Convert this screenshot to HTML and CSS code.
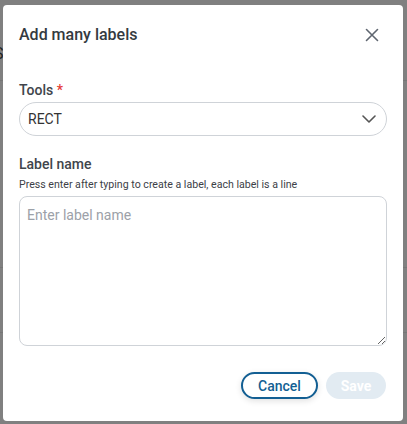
FILE: index.html
```html
<!DOCTYPE html>
<html>
<head>
<meta charset="utf-8">
<link rel="stylesheet" href="styles.css">
</head>
<body>
<div class="page">
  <span class="bg-text bg-s">S</span>
  <div class="bg-line l1"></div>
  <div class="bg-line l2"></div>
  <div class="bg-line l3"></div>
</div>
<div class="overlay">
  <div class="modal">
    <div class="header">
      <h2 class="title">Add many labels</h2>
      <button class="close" aria-label="Close">
        <svg width="14" height="14" viewBox="0 0 14 14"><path d="M1.5 1.5 L12.5 12.5 M12.5 1.5 L1.5 12.5" stroke="#5f6670" stroke-width="1.6" fill="none" stroke-linecap="round"/></svg>
      </button>
    </div>
    <div class="field">
      <label class="label">Tools <span class="req">*</span></label>
      <div class="select">
        <span>RECT</span>
        <svg width="14" height="8" viewBox="0 0 14 8"><path d="M1 1 L7 7 L13 1" stroke="#555" stroke-width="1.6" fill="none" stroke-linecap="round" stroke-linejoin="round"/></svg>
      </div>
    </div>
    <div class="field field2">
      <label class="label">Label name</label>
      <div class="help">Press enter after typing to create a label, each label is a line</div>
      <textarea class="textarea" placeholder="Enter label name"></textarea>
    </div>
    <div class="footer">
      <button class="btn cancel">Cancel</button>
      <button class="btn save">Save</button>
    </div>
  </div>
</div>
</body>
</html>
```
FILE: styles.css
```css
html, body {
  margin: 0;
  padding: 0;
}
body {
  width: 407px;
  height: 424px;
  background: #808080;
  font-family: Roboto, "Liberation Sans", sans-serif;
  overflow: hidden;
}
.page {
  position: relative;
  width: 407px;
  height: 424px;
}
.bg-text {
  position: absolute;
  color: #222;
  font-size: 16px;
}
.bg-s {
  left: -6px;
  top: 44px;
}
.bg-line {
  position: absolute;
  left: 0;
  width: 407px;
  height: 1px;
  background: #767676;
}
.l1 { top: 80px; }
.l2 { top: 267px; }
.l3 { top: 332px; }
.overlay {
  position: fixed;
  inset: 0;
}
.modal {
  margin: 5px 0 0 3px;
  width: 400px;
  height: 416px;
  box-sizing: border-box;
  background: #fff;
  border-radius: 4px;
  padding: 0 16px;
  display: flex;
  flex-direction: column;
}
.header {
  display: flex;
  align-items: center;
  justify-content: space-between;
  padding-top: 18px;
  height: 24px;
}
.title {
  margin: 0;
  font-size: 16px;
  font-weight: 500;
  color: #343a40;
  line-height: 24px;
}
.close {
  border: 0;
  background: none;
  padding: 0;
  margin-right: 8px;
  width: 14px;
  height: 14px;
  display: flex;
}
.field {
  margin-top: 33px;
  display: flex;
  flex-direction: column;
}
.label {
  font-size: 14px;
  font-weight: 500;
  color: #40454c;
  line-height: 20px;
}
.req {
  color: #e53935;
}
.select {
  margin-top: 2px;
  height: 34px;
  box-sizing: border-box;
  border: 1px solid #cfd3d8;
  border-radius: 17px;
  padding: 0 10px 0 8px;
  display: flex;
  align-items: center;
  justify-content: space-between;
  font-size: 14px;
  color: #333;
}
.field2 {
  margin-top: 18px;
}
.help {
  font-size: 10.6px;
  line-height: 14px;
  color: #3c4147;
  margin-top: 4px;
}
.textarea {
  margin-top: 4px;
  height: 150px;
  box-sizing: border-box;
  border: 1px solid #cfd3d8;
  border-radius: 8px;
  padding: 10px 7px 8px;
  font-family: Roboto, "Liberation Sans", sans-serif;
  font-size: 14px;
  resize: vertical;
  outline: none;
}
.textarea::placeholder {
  color: #9ca1a8;
}
.footer {
  margin-top: 26px;
  display: flex;
  justify-content: flex-end;
  gap: 8px;
  padding-right: 1px;
}
.btn {
  height: 27px;
  border-radius: 14px;
  font-family: Roboto, "Liberation Sans", sans-serif;
  font-size: 14px;
  font-weight: 500;
  padding: 0;
}
.cancel {
  width: 77px;
  border: 2px solid #135f93;
  background: #fff;
  color: #135f93;
  box-shadow: 0 2px 6px rgba(0,0,0,0.12);
}
.save {
  width: 60px;
  border: 0;
  background: #e2ebf2;
  color: #fff;
  font-weight: 700;
}
```
